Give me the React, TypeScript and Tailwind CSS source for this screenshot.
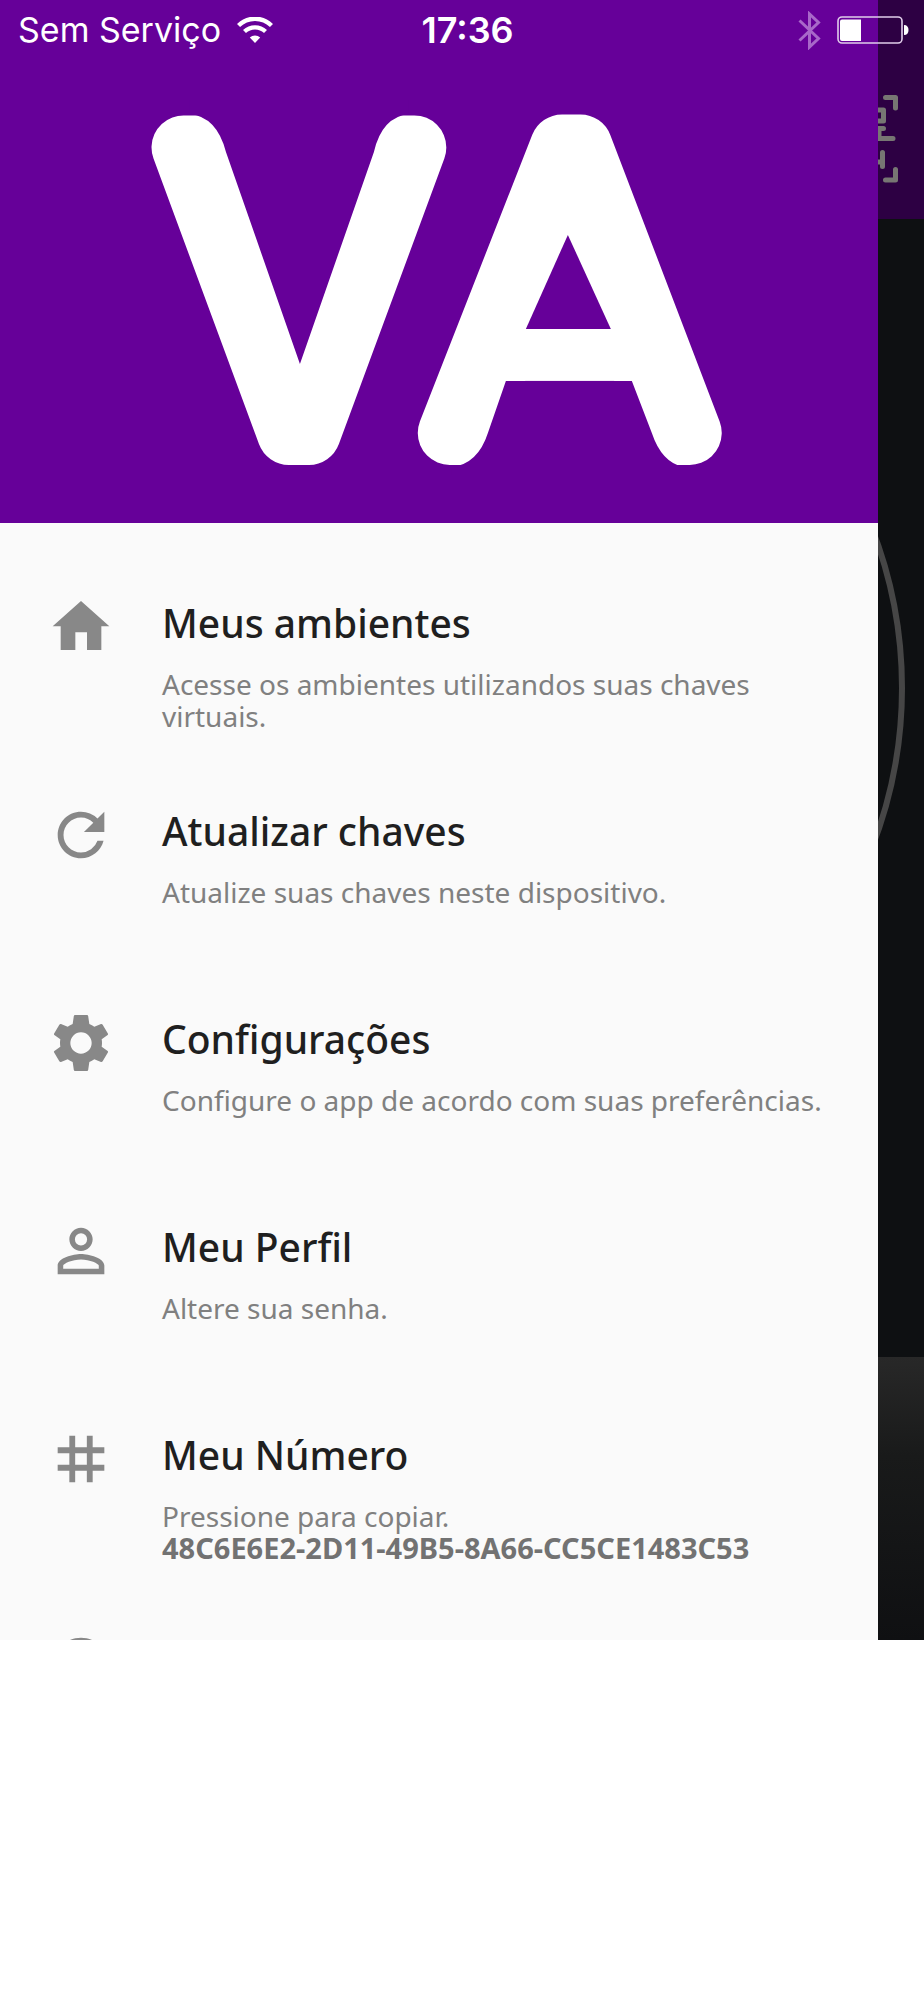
import type { ReactNode } from "react";
import { MdRefresh, MdPersonOutline, MdTag, MdHelpOutline } from "react-icons/md";

type Item = {
  title: string;
  text: string;
  code?: string;
  icon: ReactNode;
};

function HomeIcon() {
  return (
    <svg viewBox="-105 -105 210 210" className="size-[70px]" fill="currentColor">
      <path d="M0-78 85-2H61V69H18V16H-17V69H-61V-2H-85z" />
    </svg>
  );
}

function GearIcon() {
  return (
    <svg viewBox="-105 -105 210 210" className="size-[70px]" fill="currentColor" fillRule="evenodd">
      <path d="M-18-84H18Q21-84 21.500-81L25-57Q33-54 40-49L60-57Q63-58 65-55L81-28Q82-26 80-24L62-11Q64 0 62 11L80 24Q82 26 81 28L65 55Q63 58 60 57L40 49Q33 54 25 57L21.500 81Q21 84 18 84H-18Q-21 84-21.500 81L-25 57Q-33 54-40 49L-60 57Q-63 58-65 55L-81 28Q-82 26-80 24L-62 11Q-64 0-62-11L-80-24Q-82-26-81-28L-65-55Q-63-58-60-57L-40-49Q-33-54-25-57L-21.500-81Q-21-84-18-84zM0-32a32 32 0 1 0 0 64a32 32 0 1 0 0-64z" />
    </svg>
  );
}

const items: Item[] = [
  {
    title: "Meus ambientes",
    text: "Acesse os ambientes utilizandos suas chaves virtuais.",
    icon: <HomeIcon />,
  },
  {
    title: "Atualizar chaves",
    text: "Atualize suas chaves neste dispositivo.",
    icon: <MdRefresh className="size-[70px]" />,
  },
  {
    title: "Configurações",
    text: "Configure o app de acordo com suas preferências.",
    icon: <GearIcon />,
  },
  {
    title: "Meu Perfil",
    text: "Altere sua senha.",
    icon: <MdPersonOutline className="size-[70px]" />,
  },
  {
    title: "Meu Número",
    text: "Pressione para copiar.",
    code: "48C6E6E2-2D11-49B5-8A66-CC5CE1483C53",
    icon: <MdTag className="size-[70px]" />,
  },
];

function StatusBar() {
  return (
    <div className="absolute inset-x-0 top-0 grid grid-cols-[1fr_auto_1fr] items-center pt-[9px] pr-[15px] pl-[18px] font-['Inter',sans-serif] text-[34px] leading-[42px] text-white">
      <div className="flex items-center gap-4">
        <span>Sem Serviço</span>
        <svg viewBox="0 0 36 26" className="h-[26px] w-9" fill="none" stroke="currentColor">
          <path d="M1.5 8.5a23.5 23.5 0 0 1 33 0" strokeWidth="4.4" />
          <path d="M7.5 14.6a15 15 0 0 1 21 0" strokeWidth="4.2" />
          <path d="M18 26l-5.2-5.4a7.4 7.4 0 0 1 10.4 0z" fill="currentColor" stroke="none" />
        </svg>
      </div>
      <time className="pl-2 text-[36px] font-semibold">17:36</time>
      <div className="flex items-center justify-end gap-4">
        <svg viewBox="0 0 23 39" className="h-[39px] w-[23px] text-[#a868c9]" fill="none" stroke="currentColor" strokeWidth="3">
          <path d="M1.500 9.500 20.500 27.500 11.500 36V3l9 8.500L1.500 29.500" />
        </svg>
        <svg viewBox="0 0 72 28" className="h-7 w-[72px]">
          <rect x="1" y="1" width="64" height="26" rx="4" fill="none" stroke="#e0cdea" strokeWidth="1.6" />
          <path d="M5 3.500h19v21.500H5a2 2 0 0 1-2-2v-17.500a2 2 0 0 1 2-2z" fill="#fff" />
          <path d="M67 9c3 0 4.500 2 4.500 5s-1.500 5-4.500 5z" fill="#fff" />
        </svg>
      </div>
    </div>
  );
}

function Backdrop() {
  return (
    <div className="flex h-full flex-col bg-[#0e1012]">
      <div className="flex h-[219px] shrink-0 justify-end bg-[#2d0043] pt-[95px] pr-[26px]">
        <svg
          viewBox="0 0 88 88"
          className="size-[88px] text-[#777673]"
          fill="none"
          stroke="currentColor"
          strokeWidth="5"
          strokeLinecap="round"
          strokeLinejoin="round"
        >
          <path d="M12 2.500H2.500V13M75.500 2.500h10V13M2.500 75v10H12M75.500 85h10V74.500" />
          <path d="M60 15h13.500v11H60zM15 15h13.500v11H15z" />
          <path d="M60 33.500h13.500M69 33.500v10M60 43.500h23" />
          <path d="M72.500 57.500v14M60 67h12" />
        </svg>
      </div>
      <div className="flex-1 px-[19px] pt-[26px]">
        <div className="aspect-square rounded-full border-[6px] border-[#464646]" />
      </div>
      <div className="h-[283px] shrink-0 bg-linear-to-b from-[#282828] via-[#191a1a] via-35% to-[#0f1012]" />
    </div>
  );
}

function Logo() {
  return (
    <svg
      viewBox="0 0 878 523"
      className="w-full overflow-visible font-['Open_Sans',sans-serif] font-light"
      role="img"
      aria-label="VA"
    >
      <g
        fill="#fff"
        stroke="#fff"
        strokeWidth="64"
        strokeLinejoin="round"
        fontSize="400"
        textAnchor="middle"
      >
        <text x="299" y="433">V</text>
        <text x="570" y="433">A</text>
      </g>
      <rect x="500" y="320" width="138" height="61" fill="#fff" />
      <g fill="#660099">
        <path d="M300 364 226 152Q217 117 190 114V100H409V114Q382 117 374 152z" />
        <path d="M568 235 526 329H611z" />
        <path d="M506 381 488 433Q478 464 452 467V475H684V467Q662 463 652 433L632 381z" />
      </g>
    </svg>
  );
}

function Drawer() {
  return (
    <aside className="absolute inset-y-0 left-0 w-[95%] overflow-hidden bg-[#fafafa]">
      <header className="bg-[#660099]">
        <Logo />
      </header>
      <nav className="pt-[45px]">
        <ul className="font-['Noto_Sans',sans-serif]">
          {items.map((item) => (
            <li key={item.title}>
              <button
                type="button"
                className="flex min-h-[208px] w-full items-start gap-[46px] pt-6 pr-12 pl-[46px] text-left"
              >
                <span className="shrink-0 text-[#888]">{item.icon}</span>
                <span className="pt-[7px]">
                  <span className="block text-[39px] leading-[48px] font-medium text-[#1f1f1f]">
                    {item.title}
                  </span>
                  <span className="mt-[21px] block text-[28px] leading-8 text-[#808080]">
                    {item.text}
                    {item.code && (
                      <strong className="block text-[29px] font-bold text-[#727272]">
                        {item.code}
                      </strong>
                    )}
                  </span>
                </span>
              </button>
            </li>
          ))}
          <li>
            <button type="button" aria-label="Ajuda" className="flex w-full pt-6 pl-[46px] text-[#888]">
              <MdHelpOutline className="size-[70px]" />
            </button>
          </li>
        </ul>
      </nav>
    </aside>
  );
}

export default function App() {
  return (
    <div className="min-h-screen bg-white">
      <main className="relative aspect-[924/1640] w-full overflow-hidden">
        <Backdrop />
        <Drawer />
        <StatusBar />
      </main>
    </div>
  );
}
